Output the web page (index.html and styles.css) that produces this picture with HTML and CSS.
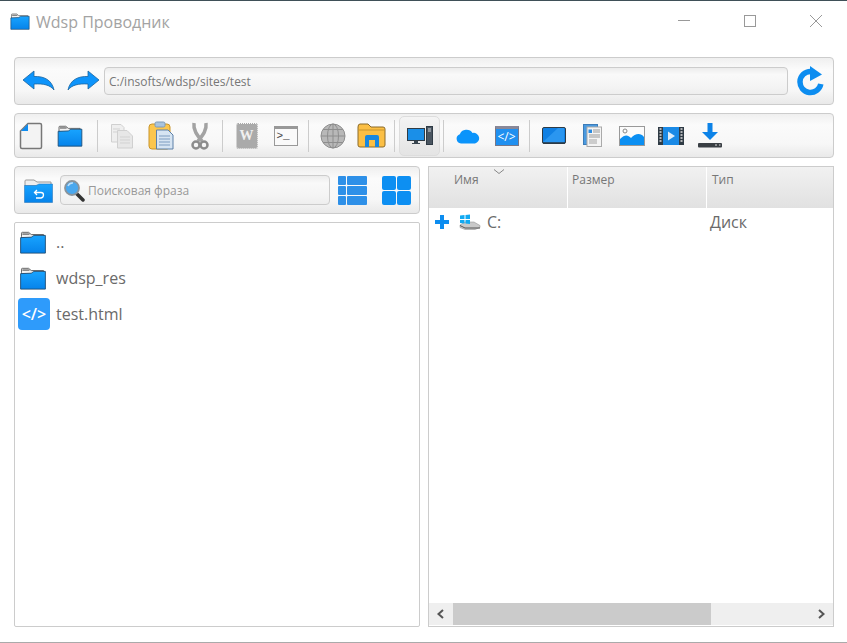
FILE: index.html
```html
<!DOCTYPE html>
<html lang="ru">
<head>
<meta charset="UTF-8">
<title>Wdsp Проводник</title>
<link rel="stylesheet" href="styles.css">
</head>
<body>

<svg class="defs" width="0" height="0">
    <defs>
        <linearGradient id="blue" x1="0" y1="0" x2="0" y2="1">
            <stop offset="0" stop-color="#18a4ff"/>
            <stop offset="1" stop-color="#0683ea"/>
        </linearGradient>
        <symbol id="folder" viewBox="0 0 30 26">
            <path d="M2 6V2.5Q2 1.500 3 1.500H10L13 4H27V8H2Z" fill="#f2f2f2" stroke="#555" stroke-width="1"/>
            <path d="M3 3.500H11" stroke="#666" stroke-width="1.500"/>
            <path d="M1 7.500L13 7L16 5H29V25H1Z" fill="url(#blue)" stroke="#1c4a70" stroke-width="1"/>
        </symbol>
    </defs>
</svg>

<div class="window">
    <div class="titlebar">
        <svg class="title-icon" width="20" height="17"><use href="#folder"/></svg>
        <span class="title">Wdsp Проводник</span>
        <div class="controls">
            <svg width="14" height="14"><path d="M1 6.500H13" stroke="#999"/></svg>
            <svg width="14" height="14"><rect x="1.500" y="1.500" width="11" height="11" fill="none" stroke="#999"/></svg>
            <svg width="14" height="14"><path d="M1 1L13 13M13 1L1 13" stroke="#999"/></svg>
        </div>
    </div>

    <div class="panel address-bar">
        <svg width="34" height="24" viewBox="0 0 34 24"><path d="M1 11L12 2V7.500C22 7 30 11 32 21C28 16 22 14.500 12 15V20Z" fill="#0d94fb" stroke="#1a64a0" stroke-width="0.800"/></svg>
        <svg width="34" height="24" viewBox="0 0 34 24"><path d="M33 11L22 2V7.500C12 7 4 11 2 21C6 16 12 14.500 22 15V20Z" fill="#0d94fb" stroke="#1a64a0" stroke-width="0.800"/></svg>
        <div class="input address-input">C:/insofts/wdsp/sites/test</div>
        <svg width="28" height="30" viewBox="0 0 28 30"><path d="M23.800 18A10.500 10.500 0 1 1 13.500 5.500" fill="none" stroke="#0d8df0" stroke-width="5.500"/><path d="M13 0L25 8.500L13 15Z" fill="#0d8df0"/></svg>
    </div>

    <div class="panel toolbar">
        <div class="tool"><svg width="24" height="28" viewBox="0 0 24 28"><path d="M9 1.500H21Q22.500 1.500 22.500 3V25Q22.500 26.500 21 26.500H3Q1.500 26.500 1.500 25V9Z" fill="#f3f3f3" stroke="#777" stroke-width="1.500"/><path d="M9 2L2 9H9Z" fill="#0e8cf0"/></svg></div>
        <div class="tool"><svg width="26" height="22"><use href="#folder"/></svg></div>
        <div class="sep sep-wide"></div>
        <div class="tool"><svg width="24" height="26" viewBox="0 0 24 26" class="faded"><path d="M1.500 1.500H11L14 4.500V19H1.500Z" fill="#eee" stroke="#ccc"/><path d="M7.500 7.500H17L22.500 13V25H7.500Z" fill="#e6e6e6" stroke="#ccc"/><path d="M10 14H20M10 17H20M10 20H20M3 6H10M3 9H7" stroke="#cfcfcf"/></svg></div>
        <div class="tool"><svg width="26" height="30" viewBox="0 0 26 30"><rect x="1" y="3" width="21" height="25" rx="3" fill="#fbc64e" stroke="#c9952c"/><rect x="7" y="1" width="10" height="5" rx="1.500" fill="#a9c4de" stroke="#7c9ab8"/><path d="M8.500 9H20L25 14V28H8.500Z" fill="#d6e4f2" stroke="#5c80a8"/><path d="M11 15H22M11 18H22M11 21H22M11 24H22" stroke="#7c9cc0"/></svg></div>
        <div class="tool"><svg width="18" height="28" viewBox="0 0 18 28"><path d="M3 1C2 8 6 13 11 19M15 1C16 8 12 13 7 19" fill="none" stroke="#a3a3a3" stroke-width="3.500"/><circle cx="5" cy="23" r="3.500" fill="none" stroke="#8c8c8c" stroke-width="2.500"/><circle cx="13" cy="23" r="3.500" fill="none" stroke="#8c8c8c" stroke-width="2.500"/></svg></div>
        <div class="sep"></div>
        <div class="tool"><div class="wiki-icon">W</div></div>
        <div class="tool"><div class="term-icon">&gt;_</div></div>
        <div class="sep"></div>
        <div class="tool"><svg width="26" height="26" viewBox="0 0 26 26"><circle cx="13" cy="13" r="12" fill="#b8b8b8" stroke="#8e8e8e"/><ellipse cx="13" cy="13" rx="5.500" ry="12" fill="none" stroke="#8e8e8e"/><path d="M13 1V25M1 13H25M3 6.500H23M3 19.500H23" stroke="#8e8e8e" fill="none"/></svg></div>
        <div class="tool"><svg width="29" height="25" viewBox="0 0 29 25"><path d="M1 4Q1 1 3 1H11L14 4H26Q28 4 28 6V22Q28 24 26 24H3Q1 24 1 22Z" fill="#fbbf45" stroke="#8a6a2a"/><path d="M1 7H28" stroke="#c9952c"/><path d="M8 24V14Q8 12 10 12H20Q22 12 22 14V24H18V17H12V24Z" fill="#1787e0"/></svg></div>
        <div class="sep"></div>
        <div class="tool tool-active"><svg width="26" height="20" viewBox="0 0 26 20"><rect x="0.500" y="2.500" width="17" height="12" fill="#1a8fe8" stroke="#2f3b45"/><path d="M7 15H11V17H13V18H5V17H7Z" fill="#3a4650"/><rect x="19.500" y="0.500" width="6" height="18" fill="#4a5560" stroke="#2f3b45"/><path d="M21 3H24M21 5H24" stroke="#cfd6dc"/></svg></div>
        <div class="sep"></div>
        <div class="tool"><svg width="24" height="16" viewBox="0 0 24 16"><path d="M5 15.500A4.800 4.800 0 0 1 3.800 6.200A7 6.500 0 0 1 16.500 5A5.300 5.300 0 0 1 19 15.500Z" fill="#0b94fb"/></svg></div>
        <div class="tool"><div class="code-window"><span>&lt;/&gt;</span></div></div>
        <div class="sep"></div>
        <div class="tool"><svg width="24" height="18" viewBox="0 0 24 18"><rect x="0.500" y="0.500" width="23" height="16" rx="1.500" fill="#1080e4" stroke="#2f3b45"/><path d="M1 15L16 1H22V15Z" fill="#2a96f0"/><path d="M1 16H23" stroke="#2f3b45" stroke-width="1.500"/></svg></div>
        <div class="tool"><svg width="19" height="23" viewBox="0 0 19 23"><rect x="0.500" y="0.500" width="14" height="20" fill="#4a9ae0" stroke="#3c7cb8"/><rect x="4" y="3" width="14.500" height="19.500" fill="#f4f4f4" stroke="#aaa"/><path d="M5.500 5.500H9V9H5.500Z" fill="#2b8be0"/><path d="M10 6H17M10 8H17M6 11H17M6 13H17" stroke="#999"/><rect x="6" y="15" width="8" height="5" fill="#ccc"/></svg></div>
        <div class="tool"><svg width="26" height="20" viewBox="0 0 26 20"><rect x="0.500" y="0.500" width="25" height="19" fill="#fbfbfb" stroke="#999"/><circle cx="6" cy="5" r="2" fill="none" stroke="#888"/><path d="M1 19V13C6 8 9 9 12 12C16 8 21 6 25 11V19Z" fill="#0b8ff2"/></svg></div>
        <div class="tool"><svg width="26" height="20" viewBox="0 0 26 20"><rect x="0" y="1" width="26" height="18" fill="#2f3b45"/><rect x="5" y="1" width="16" height="18" fill="#1a8ae6"/><path d="M1.500 3H3.500M1.500 6H3.500M1.500 9H3.500M1.500 12H3.500M1.500 15H3.500M22.500 3H24.500M22.500 6H24.500M22.500 9H24.500M22.500 12H24.500M22.500 15H24.500" stroke="#ddd" stroke-width="1.500"/><path d="M10 5.500L17 10L10 14.500Z" fill="#dfeefb"/></svg></div>
        <div class="tool"><svg width="24" height="25" viewBox="0 0 24 25"><path d="M9.500 0H14.500V9H20L12 17L4 9H9.500Z" fill="#0d83e8"/><rect x="0" y="20" width="24" height="4.500" rx="1" fill="#3a3f44"/><path d="M17 22H19M21 22H22.500" stroke="#ddd"/></svg></div>
    </div>

    <div class="columns">
        <div class="left-col">
            <div class="panel search-bar">
                <svg width="29" height="25" viewBox="0 0 29 25"><path d="M1 7V3Q1 2 2 2H10L13 4H27V8H1Z" fill="#eee" stroke="#999"/><path d="M0.500 7.500L12 7.500L15 6H28.500V24.500H0.500Z" fill="url(#blue)" stroke="#1c6ab0" stroke-width="0.500"/><path d="M13 12L10.500 14.500L13 17M11 14.500H17Q19.500 14.500 19.500 17T17 20H12" fill="none" stroke="#fff" stroke-width="1.300"/></svg>
                <div class="input search-input">
                    <svg width="22" height="25" viewBox="0 0 22 25"><path d="M13 15L20 22" stroke="#333" stroke-width="3.500" stroke-linecap="round"/><circle cx="9" cy="10" r="7" fill="#4aa8ee" stroke="#8a949c" stroke-width="1.800"/><path d="M5 8A5 5 0 0 1 10 5" fill="none" stroke="#bfe0fa" stroke-width="1.500"/></svg>
                    <span>Поисковая фраза</span>
                </div>
                <div class="view-list">
                    <i></i><i></i><i></i><i></i><i></i><i></i>
                </div>
                <div class="view-tiles">
                    <i></i><i></i><i></i><i></i>
                </div>
            </div>
            <div class="file-list">
                <div class="file-row"><svg width="30" height="23"><use href="#folder"/></svg><span>..</span></div>
                <div class="file-row"><svg width="30" height="23"><use href="#folder"/></svg><span>wdsp_res</span></div>
                <div class="file-row"><div class="html-icon">&lt;/&gt;</div><span>test.html</span></div>
            </div>
        </div>

        <div class="tree">
            <div class="tree-head">
                <div class="head-cell head-name">Имя<svg class="sort-arrow" width="12" height="6"><path d="M1 0.500L6 4.500L11 0.500" fill="none" stroke="#888"/></svg></div>
                <div class="head-cell">Размер</div>
                <div class="head-cell">Тип</div>
            </div>
            <div class="tree-body">
                <div class="tree-row">
                    <div class="tree-name">
                        <svg width="14" height="14" viewBox="0 0 14 14"><path d="M5 0H9V5H14V9H9V14H5V9H0V5H5Z" fill="#0d8df0"/></svg>
                        <svg width="22" height="16" viewBox="0 0 22 16"><path d="M1 11L6 8H15L21 11.500V13.500L16 15.500H6L1 13.500Z" fill="#c9c9c9" stroke="#888" stroke-width="0.500"/><path d="M1 11.500L6 14H21" stroke="#555" fill="none"/><path d="M1 1.500L5.500 1V5H1ZM6.500 1L11 0.500V5H6.500ZM1 6H5.500V9.500L1 9ZM6.500 6H11V10L6.500 9.500Z" fill="#12aaf2"/></svg>
                        <span>C:</span>
                    </div>
                    <div></div>
                    <div class="tree-type">Диск</div>
                </div>
            </div>
            <div class="hscroll">
                <svg width="24" height="22" viewBox="0 0 24 22"><path d="M14 7L9.500 11L14 15" fill="none" stroke="#555" stroke-width="2"/></svg>
                <div class="hscroll-track"><div class="hscroll-thumb"></div></div>
                <svg width="24" height="22" viewBox="0 0 24 22"><path d="M10 7L14.500 11L10 15" fill="none" stroke="#555" stroke-width="2"/></svg>
            </div>
        </div>
    </div>
</div>

</body>
</html>
```

FILE: styles.css
```css
html, body {
    height: 100%;
}
body {
    margin: 0;
    background-color: #fff;
    color: #666;
    font-family: "Open Sans", "Noto Sans", sans-serif;
    overflow: hidden;
}
.defs {
    display: block;
    height: 0;
}
.window {
    box-sizing: border-box;
    height: 643px;
    border-top: 1px solid #3f5058;
    border-bottom: 1px solid #aaa;
    padding: 0 13px 0 14px;
    display: flex;
    flex-direction: column;
}
.titlebar {
    height: 56px;
    margin-left: -4px;
    display: flex;
    align-items: flex-start;
    padding-top: 12px;
    box-sizing: border-box;
    flex-shrink: 0;
}
.title {
    margin-left: 6px;
    font-size: 16px;
    line-height: 18px;
    color: #a3a3a3;
}
.controls {
    margin-left: auto;
    display: flex;
    gap: 52px;
    padding-top: 1px;
    margin-right: 11px;
}
.panel {
    box-sizing: border-box;
    border: 1px solid #ccc;
    border-radius: 4px;
    background: linear-gradient(#efefef, #fbfbfb 25%, #f7f7f7 70%, #e9e9e9);
    display: flex;
    align-items: center;
    flex-shrink: 0;
}
.input {
    box-sizing: border-box;
    border: 1px solid #ccc;
    border-radius: 4px;
    background: linear-gradient(#ececec, #f9f9f9 25%, #f4f4f4 70%, #eee);
    font-size: 12px;
    display: flex;
    align-items: center;
}
.address-bar {
    height: 48px;
    padding: 0 8px 0 7px;
}
.address-bar svg:nth-child(2) {
    margin-left: 10px;
}
.address-input {
    flex: 1;
    height: 28px;
    margin: 0 9px 0 4px;
    padding-left: 4px;
    color: #777;
}
.toolbar {
    height: 45px;
    margin-top: 8px;
}
.tool {
    width: 39px;
    height: 40px;
    display: flex;
    align-items: center;
    justify-content: center;
    flex-shrink: 0;
}
.tool-active {
    width: 41px;
    border: 1px solid #ddd;
    border-radius: 5px;
    box-sizing: border-box;
    background: linear-gradient(#f4f4f4, #e4e4e4);
}
.toolbar .tool:first-child {
    margin-left: -4px;
}
.sep {
    width: 1px;
    height: 32px;
    background-color: #ccc;
    margin: 0 4px 0 3px;
    flex-shrink: 0;
}
.sep-wide {
    margin-left: 8px;
}
.faded {
    opacity: 0.9;
}
.wiki-icon {
    width: 20px;
    height: 24px;
    background-color: #aaa;
    outline: 1px dotted #aaa;
    color: #f0f0f0;
    font-family: "Liberation Serif", serif;
    font-weight: bold;
    font-size: 14px;
    display: flex;
    align-items: center;
    justify-content: center;
    border-radius: 1px;
}
.term-icon {
    box-sizing: border-box;
    width: 24px;
    height: 20px;
    border: 1px solid #999;
    border-top: 3px solid #999;
    background-color: #fafafa;
    font-family: "Liberation Mono", monospace;
    font-size: 11px;
    line-height: 15px;
    padding-left: 2px;
    color: #444;
}
.code-window {
    box-sizing: border-box;
    width: 24px;
    height: 20px;
    border: 1px solid #778;
    border-top: 3px solid #889;
    background-color: #2090f0;
    color: #fff;
    font-size: 12px;
    line-height: 15px;
    text-align: center;
}
.columns {
    flex: 1;
    display: grid;
    grid-template-columns: 406px 406px;
    gap: 8px;
    margin-top: 8px;
    margin-bottom: 15px;
    min-height: 0;
}
.left-col {
    display: flex;
    flex-direction: column;
    gap: 8px;
    min-height: 0;
}
.search-bar {
    height: 48px;
    padding-left: 9px;
}
.search-input {
    width: 270px;
    height: 30px;
    margin-left: 7px;
    padding-left: 2px;
    color: #999;
}
.search-input span {
    margin-left: 3px;
}
.view-list {
    margin-left: 8px;
    width: 29px;
    height: 29px;
    display: grid;
    grid-template-columns: 8px 20px;
    grid-auto-rows: 9px;
    gap: 1px;
}
.view-list i {
    background-color: #2e90e8;
    border-radius: 1px;
}
.view-tiles {
    margin-left: 15px;
    width: 29px;
    height: 29px;
    display: grid;
    grid-template-columns: 14px 14px;
    grid-auto-rows: 14px;
    gap: 1px;
}
.view-tiles i {
    background-color: #0d8ff2;
    border-radius: 2px;
}
.file-list {
    flex: 1;
    box-sizing: border-box;
    border: 1px solid #ccc;
    border-radius: 2px;
    padding-top: 1px;
}
.file-row {
    height: 36px;
    padding-left: 3px;
    display: flex;
    align-items: center;
    gap: 8px;
    font-size: 16px;
    color: #6a6a6a;
}
.html-icon {
    width: 32px;
    height: 32px;
    border-radius: 4px;
    background-color: #2e9bfb;
    color: #fff;
    font-size: 16px;
    font-weight: 600;
    display: flex;
    align-items: center;
    justify-content: center;
    flex-shrink: 0;
}
.file-row .html-icon + span {
    margin-left: -2px;
}
.tree {
    box-sizing: border-box;
    border: 1px solid #ccc;
    display: flex;
    flex-direction: column;
    min-height: 0;
}
.tree-head {
    height: 41px;
    display: grid;
    grid-template-columns: 139px 139px 1fr;
    background: linear-gradient(#f1f1f1, #e1e1e1);
    flex-shrink: 0;
}
.head-cell {
    position: relative;
    font-size: 12px;
    line-height: 16px;
    padding: 5px 0 0 4px;
    border-right: 1px solid #fff;
    color: #777;
}
.head-cell:last-child {
    border-right: none;
    padding-left: 5px;
}
.head-name {
    padding-left: 25px;
}
.sort-arrow {
    position: absolute;
    left: 64px;
    top: 2px;
}
.tree-body {
    flex: 1;
    min-height: 0;
}
.tree-row {
    display: grid;
    grid-template-columns: 139px 139px 1fr;
    height: 28px;
    align-items: center;
    font-size: 16px;
    color: #6a6a6a;
}
.tree-name {
    display: flex;
    align-items: center;
    padding-left: 6px;
    gap: 9px;
}
.tree-name svg + svg {
    margin-left: 1px;
}
.tree-name span {
    margin-left: -3px;
}
.tree-type {
    padding-left: 3px;
}
.hscroll {
    height: 22px;
    margin-bottom: 1px;
    background-color: #efefef;
    display: flex;
    flex-shrink: 0;
}
.hscroll-track {
    flex: 1;
}
.hscroll-thumb {
    width: 258px;
    height: 22px;
    background-color: #cbcbcb;
}
```
